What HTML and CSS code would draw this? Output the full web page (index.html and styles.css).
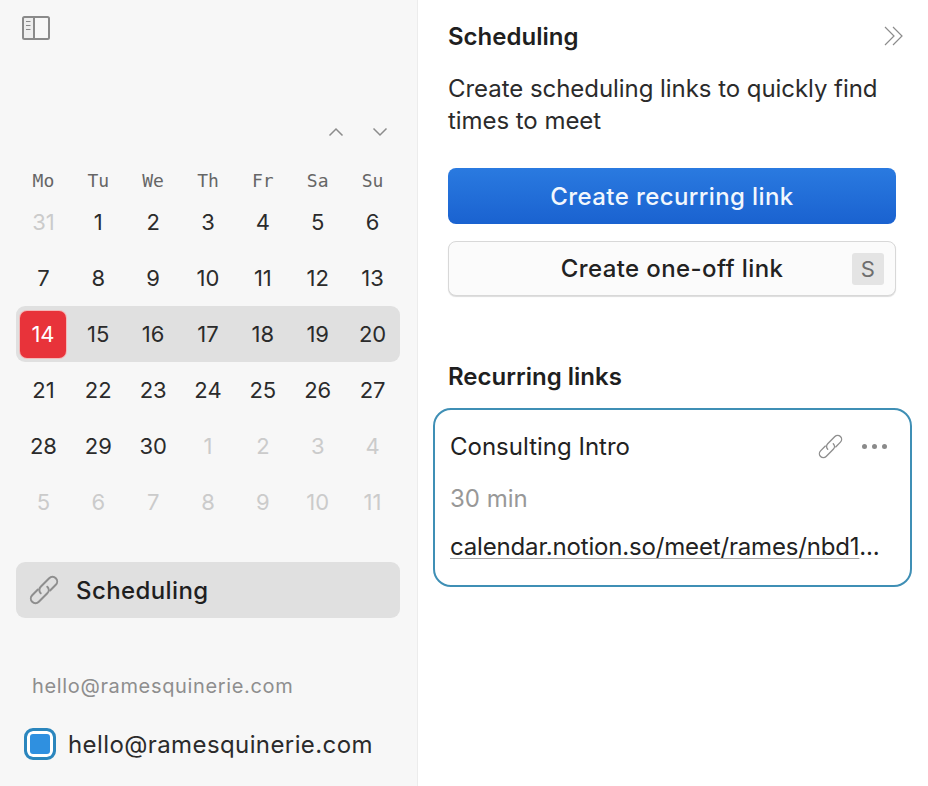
FILE: index.html
```html
<!DOCTYPE html>
<html lang="en">
<head>
    <meta charset="UTF-8">
    <meta name="viewport" content="width=device-width, initial-scale=1.0">
    <title>Scheduling</title>
    <link rel="stylesheet" href="styles.css">
</head>
<body>

    <div class="sidebar">
        <svg class="sidebar-icon" width="30" height="26" viewBox="0 0 30 26" fill="none" stroke="#8a8a8a">
            <path d="M3 3h9v20h-9z" fill="#8a8a8a" fill-opacity="0.08" stroke="none"/>
            <rect x="2" y="2" width="26" height="22" rx="1.5" stroke-width="2"/>
            <path d="M13 2v22" stroke-width="2"/>
            <path d="M5 6.500h4.500M5 10.500h4.500M5 14.500h4.500" stroke-width="1"/>
        </svg>

        <div class="month-nav">
            <svg width="16" height="10" viewBox="0 0 16 10" fill="none" stroke="#8c8c8c" stroke-width="1.5">
                <path d="M1.5 8.500L8 2l6.500 6.500"/>
            </svg>
            <svg width="16" height="10" viewBox="0 0 16 10" fill="none" stroke="#8c8c8c" stroke-width="1.5">
                <path d="M1.5 1.500L8 8l6.500-6.500"/>
            </svg>
        </div>

        <div class="weekdays">
            <span>Mo</span><span>Tu</span><span>We</span><span>Th</span><span>Fr</span><span>Sa</span><span>Su</span>
        </div>

        <div class="week">
            <span class="muted">31</span><span>1</span><span>2</span><span>3</span><span>4</span><span>5</span><span>6</span>
        </div>
        <div class="week">
            <span>7</span><span>8</span><span>9</span><span>10</span><span>11</span><span>12</span><span>13</span>
        </div>
        <div class="week current">
            <span class="today">14</span><span>15</span><span>16</span><span>17</span><span>18</span><span>19</span><span>20</span>
        </div>
        <div class="week">
            <span>21</span><span>22</span><span>23</span><span>24</span><span>25</span><span>26</span><span>27</span>
        </div>
        <div class="week">
            <span>28</span><span>29</span><span>30</span><span class="muted">1</span><span class="muted">2</span><span class="muted">3</span><span class="muted">4</span>
        </div>
        <div class="week">
            <span class="muted">5</span><span class="muted">6</span><span class="muted">7</span><span class="muted">8</span><span class="muted">9</span><span class="muted">10</span><span class="muted">11</span>
        </div>

        <div class="nav-item">
            <svg width="32" height="32" viewBox="0 0 24 24" fill="none" stroke="#8e8e8e" stroke-width="1.5" stroke-linecap="round">
                <g transform="translate(12 12) rotate(-45)">
                    <path d="M-3-3.500H-9A3.500 3.500 0 0 0-9 3.500H0A3.500 3.500 0 0 0 3.500 0"/>
                    <path d="M3 3.500H9A3.500 3.500 0 0 0 9-3.500H0A3.500 3.500 0 0 0-3.500 0"/>
                </g>
            </svg>
            <span>Scheduling</span>
        </div>

        <div class="account-label">hello@ramesquinerie.com</div>
        <div class="account">
            <span class="checkbox"></span>
            <span>hello@ramesquinerie.com</span>
        </div>
    </div>

    <div class="main">
        <div class="main-header">
            <h2>Scheduling</h2>
            <svg width="22" height="22" viewBox="0 0 22 22" fill="none" stroke="#8c8c8c" stroke-width="1.2">
                <path d="M2 2l9 9-9 9M10 2l9 9-9 9"/>
            </svg>
        </div>
        <p class="intro">Create scheduling links to quickly find times to meet</p>

        <button class="btn btn-primary">Create recurring link</button>
        <button class="btn btn-secondary">Create one-off link<span class="shortcut">S</span></button>

        <h2 class="section-title">Recurring links</h2>
        <div class="link-card">
            <div class="card-title">
                <span>Consulting Intro</span>
                <div class="card-actions">
                    <svg width="27" height="27" viewBox="0 0 24 24" fill="none" stroke="#8e8e8e" stroke-width="1.2" stroke-linecap="round">
                        <g transform="translate(12 12) rotate(-45)">
                            <path d="M-3-3.500H-9A3.500 3.500 0 0 0-9 3.500H0A3.500 3.500 0 0 0 3.500 0"/>
                            <path d="M3 3.500H9A3.500 3.500 0 0 0 9-3.500H0A3.500 3.500 0 0 0-3.500 0"/>
                        </g>
                    </svg>
                    <span class="dots"><i></i><i></i><i></i></span>
                </div>
            </div>
            <div class="duration">30 min</div>
            <div class="card-url"><span class="url-text">calendar.notion.so/meet/rames/nbd1</span>...</div>
        </div>
    </div>

</body>
</html>
```

FILE: styles.css
```css
body {
    font-family: Inter, "Liberation Sans", sans-serif;
    margin: 0;
    display: flex;
    height: 786px;
    overflow: hidden;
    background: #fff;
    color: #2b2b2b;
}

.sidebar {
    width: 384px;
    flex-shrink: 0;
    padding: 15px 17px 0 16px;
    background: #f7f7f7;
    border-right: 1px solid #ececec;
}

.sidebar-icon {
    display: block;
    margin-left: 5px;
}

.month-nav {
    display: flex;
    justify-content: flex-end;
    gap: 28px;
    margin-top: 86px;
    padding-right: 12px;
}

.weekdays {
    display: grid;
    grid-template-columns: repeat(7, 1fr);
    margin-top: 32px;
    font-family: "DejaVu Sans Mono", monospace;
    font-size: 18px;
    line-height: 24px;
    color: #666;
    text-align: center;
}

.week {
    display: grid;
    grid-template-columns: repeat(7, 1fr);
    align-items: center;
    height: 56px;
    font-size: 22px;
    text-align: center;
    color: #2b2b2b;
}

.weekdays + .week {
    margin-top: 1px;
}

.week.current {
    background: #e0e0e0;
    border-radius: 9px;
}

.muted {
    color: #cbcbcb;
}

.today {
    display: flex;
    align-items: center;
    justify-content: center;
    width: 46px;
    height: 47px;
    margin-left: 4px;
    border-radius: 7px;
    background: #e8333a;
    color: #fff;
    box-shadow: 0 0 0 1px #f3b9b9;
}

.nav-item {
    display: flex;
    align-items: center;
    gap: 16px;
    height: 56px;
    margin-top: 32px;
    padding-left: 12px;
    background: #e0e0e0;
    border-radius: 9px;
    font-size: 24px;
    font-weight: 500;
    letter-spacing: 0.4px;
    color: #1f1f1f;
}

.account-label {
    margin-top: 55px;
    padding-left: 16px;
    font-size: 20px;
    line-height: 26px;
    letter-spacing: 0.65px;
    color: #8e8e8e;
}

.account {
    display: flex;
    align-items: center;
    gap: 12px;
    margin-top: 29px;
    padding-left: 8px;
    font-size: 24px;
    letter-spacing: 0.4px;
    color: #2b2b2b;
}

.checkbox {
    width: 32px;
    height: 32px;
    box-sizing: border-box;
    border: 3px solid #2b86bd;
    border-radius: 9px;
    background: #2f90e0;
    box-shadow: inset 0 0 0 3px #fff;
}

.main {
    width: 448px;
    flex-shrink: 0;
    padding-left: 30px;
}

.main-header {
    display: flex;
    align-items: center;
    justify-content: space-between;
    height: 30px;
    margin-top: 21px;
    margin-right: -9px;
}

h2 {
    margin: 0;
    font-size: 24px;
    font-weight: 600;
    color: #1f1f1f;
}

.intro {
    margin: 22px 0 0;
    font-size: 24px;
    line-height: 32px;
    letter-spacing: -0.05px;
    color: #2b2b2b;
}

.btn {
    display: block;
    position: relative;
    width: 448px;
    box-sizing: border-box;
    border-radius: 8px;
    font-family: inherit;
    font-size: 24px;
    font-weight: 450;
    letter-spacing: 0.4px;
}

.btn-primary {
    height: 56px;
    margin-top: 31px;
    border: 0;
    background: linear-gradient(#2a7ae0, #1a62d0);
    color: #f2f7fd;
}

.btn-secondary {
    height: 55px;
    margin-top: 17px;
    border: 1px solid #d8d8d8;
    background: #fbfbfb;
    color: #222;
    box-shadow: 0 1px 1px #dcdcdc;
}

.shortcut {
    position: absolute;
    top: 11px;
    right: 11px;
    width: 32px;
    height: 32px;
    border-radius: 3px;
    background: #e4e4e4;
    color: #6e6e6e;
    font-size: 22px;
    font-weight: 400;
    line-height: 32px;
}

.section-title {
    margin-top: 66px;
    line-height: 30px;
}

.link-card {
    box-sizing: border-box;
    width: 479px;
    height: 179px;
    margin: 16px 0 0 -15px;
    padding: 20px 15px 0;
    border: 2px solid #3f8fb5;
    border-radius: 18px;
    font-size: 24px;
}

.card-title {
    display: flex;
    align-items: center;
    justify-content: space-between;
    height: 32px;
    color: #222;
}

.card-actions {
    display: flex;
    align-items: center;
    gap: 18px;
    margin-right: 8px;
}

.dots {
    display: flex;
    gap: 5px;
}

.dots i {
    width: 5px;
    height: 5px;
    border-radius: 50%;
    background: #8a8a8a;
}

.duration {
    margin-top: 21px;
    line-height: 32px;
    color: #989898;
}

.card-url {
    margin-top: 16px;
    line-height: 32px;
    letter-spacing: -0.17px;
    color: #222;
    white-space: nowrap;
}

.url-text {
    text-decoration: underline;
    text-decoration-color: #a8a8a8;
    text-decoration-thickness: 1px;
    text-underline-offset: 3px;
}
```
